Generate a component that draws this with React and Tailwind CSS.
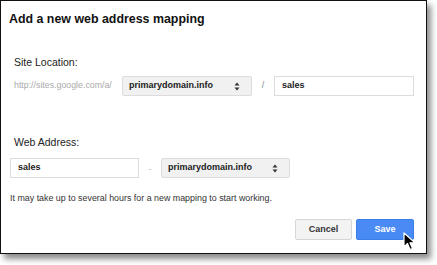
import React from "react";

function Arrows() {
  return (
    <svg width="6" height="9" viewBox="0 0 6 9" className="shrink-0">
      <path d="M3 0.5 L5.5 3.6 L0.5 3.6 Z" fill="#333" />
      <path d="M3 8.5 L5.5 5.4 L0.5 5.4 Z" fill="#333" />
    </svg>
  );
}

function Select({ className }) {
  return (
    <div
      className={
        "flex items-center justify-between h-[20px] pl-[6px] pr-[11px] bg-[#f1f1f1] border border-[#dcdcdc] rounded-[2px] text-[9px] font-bold text-[#222] " +
        className
      }
    >
      <span>primarydomain.info</span>
      <Arrows />
    </div>
  );
}

function Input({ className, value }) {
  return (
    <div
      className={
        "flex items-center h-[20px] pl-[7px] bg-white border border-[#dcdcdc] text-[9px] font-bold text-[#222] " +
        className
      }
    >
      {value}
    </div>
  );
}

function Cursor() {
  return (
    <svg
      width="14"
      height="20"
      viewBox="0 0 14 20"
      className="absolute left-[403px] top-[232px]"
    >
      <path
        d="M1 1 L1 15 L4.5 11.5 L7 17.5 L9.5 16.5 L7 10.8 L12 10.8 Z"
        fill="#000"
        stroke="#fff"
        strokeWidth="1.2"
        strokeLinejoin="round"
      />
    </svg>
  );
}

export default function App() {
  return (
    <div
      className="relative w-[437px] h-[265px] bg-white overflow-hidden"
      style={{ fontFamily: '"Liberation Sans", Arial, sans-serif' }}
    >
      <div className="w-[427px] h-[254px] border-[1.5px] border-[#111] bg-white shadow-[4px_5px_6px_rgba(0,0,0,0.45)] flex flex-col">
        <h1 className="pl-[8px] pt-[9px] text-[12.4px] font-bold text-[#111] leading-[18px]">
          Add a new web address mapping
        </h1>

        <div className="pl-[13px] pt-[27px] text-[10.5px] text-[#222] leading-[15px]">
          Site Location:
        </div>
        <div className="flex items-center mt-[6px] pl-[13px]">
          <span className="text-[8.8px] text-[#aaa] w-[108px]">
            http://sites.google.com/a/
          </span>
          <Select className="w-[130px]" />
          <span className="w-[22px] text-center text-[9px] text-[#888]">/</span>
          <Input className="w-[140px]" value="sales" />
        </div>

        <div className="pl-[13px] pt-[39px] text-[10.5px] text-[#222] leading-[15px]">
          Web Address:
        </div>
        <div className="flex items-center mt-[8px] pl-[9px]">
          <Input className="w-[129px]" value="sales" />
          <span className="w-[22px] text-center text-[9px] text-[#888]">.</span>
          <Select className="w-[129px]" />
        </div>

        <p className="pl-[9px] mt-[14px] text-[8.9px] text-[#333] leading-[12px]">
          It may take up to several hours for a new mapping to start working.
        </p>

        <div className="flex justify-end gap-[4px] pr-[12px] mt-[15px]">
          <button className="w-[57px] h-[21px] rounded-[2px] border border-[#d6d6d6] bg-[#f3f3f3] text-[9px] font-bold text-[#333]">
            Cancel
          </button>
          <button className="w-[58px] h-[21px] rounded-[2px] border border-[#3b7de9] bg-[#4a8af4] text-[9px] font-bold text-white">
            Save
          </button>
        </div>
      </div>
      <Cursor />
    </div>
  );
}
